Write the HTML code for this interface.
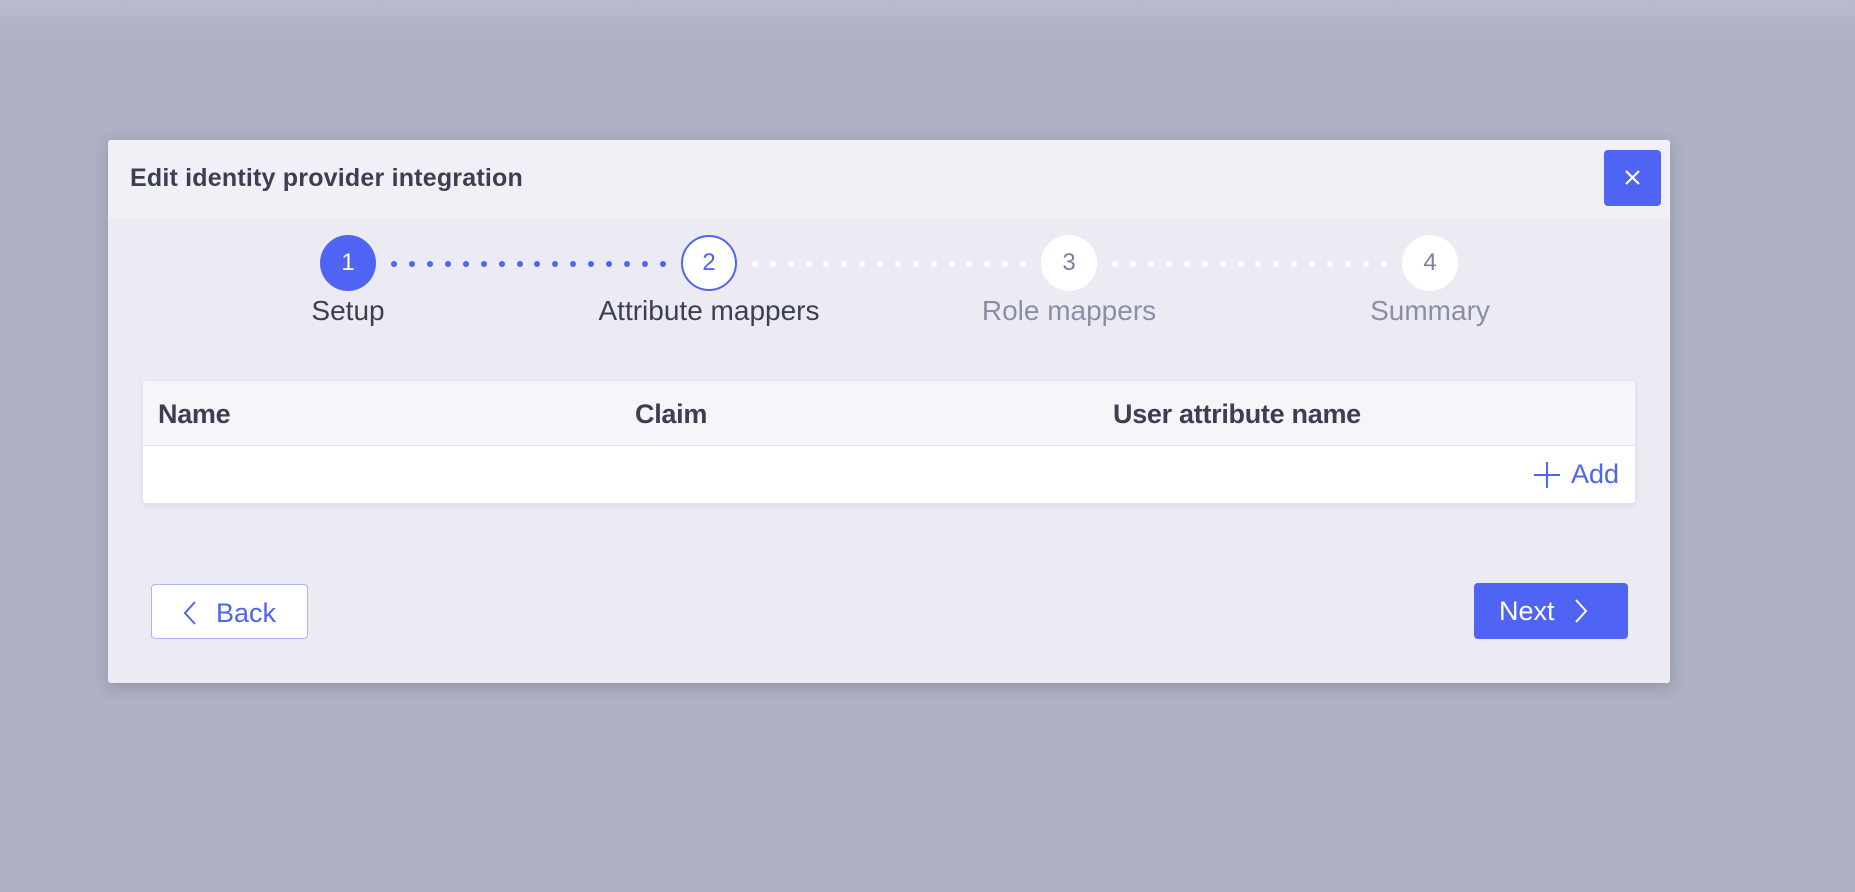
<!DOCTYPE html>
<html><head><style>
body{margin:0;width:1855px;height:892px;background:linear-gradient(#babbcc 0,#aeb0c3 40px,#aeb0c3 100%);font-family:"Liberation Sans",sans-serif;position:relative;overflow:hidden}
.dlg{position:absolute;left:108px;top:140px;width:1562px;height:543px;background:#ecebf4;border-radius:3px;box-shadow:0 4px 14px rgba(60,60,90,.25)}
.hdr{position:absolute;left:0;top:0;right:0;height:78px;background:#f1f0f6;border-radius:3px 3px 0 0}
.title{position:absolute;left:22px;top:24px;font-size:25px;font-weight:bold;color:#3c3f52;letter-spacing:0.2px}
.close{position:absolute;left:1496px;top:10px;width:57px;height:56px;background:#4f63f5;border-radius:4px}
.c{position:absolute;width:56px;height:56px;border-radius:50%;box-sizing:border-box;text-align:center;line-height:56px;font-size:24px}
.lbl{position:absolute;font-size:28px;transform:translateX(-50%);white-space:nowrap;top:155px}
.dot{position:absolute;width:7px;height:7px;border-radius:50%;top:120px}
.tbl{position:absolute;left:35px;top:241px;width:1492px;height:122px;background:#fff;border-radius:3px;box-shadow:0 2px 6px rgba(80,80,120,.12)}
.th{position:absolute;left:0;top:0;right:0;height:64px;background:#f6f5fa;border-bottom:1px solid #e6e5ee}
.th span{position:absolute;top:18px;font-size:27px;font-weight:bold;color:#3c3f52;letter-spacing:-0.3px}
.btn{position:absolute;box-sizing:border-box;border-radius:4px;font-size:27px}
</style></head><body>
<div class="dlg">
 <div class="hdr"><div class="title">Edit identity provider integration</div>
  <div class="close"><svg width="57" height="56"><path d="M22 21L35 34M35 21L22 34" stroke="#fff" stroke-width="2.2" fill="none"/></svg></div>
 </div>
 <div class="c" style="left:212px;top:95px;background:#4f63f5;color:#fff">1</div>
 <div class="c" style="left:573px;top:95px;background:#fff;border:2px solid #4f63f5;color:#4f63f5;line-height:52px">2</div>
 <div class="c" style="left:933px;top:95px;background:#fff;color:#7c809a">3</div>
 <div class="c" style="left:1294px;top:95px;background:#fff;color:#7c809a">4</div>
 <div class="lbl" style="left:240px;color:#3c3f52">Setup</div>
 <div class="lbl" style="left:601px;color:#3c3f52">Attribute mappers</div>
 <div class="lbl" style="left:961px;color:#8a8ea6">Role mappers</div>
 <div class="lbl" style="left:1322px;color:#8a8ea6">Summary</div>
 <div id="dots"></div>
 <div class="tbl"><div class="th"><span style="left:15px">Name</span><span style="left:492px">Claim</span><span style="left:970px">User attribute name</span></div>
  <div style="position:absolute;right:16px;top:78px;font-size:27px;color:#4f63f5;display:flex;align-items:center"><svg width="28" height="28" style="margin-right:10px"><path d="M14 1V27M1 14H27" stroke="#4f63f5" stroke-width="2" fill="none"/></svg>Add</div>
 </div>
 <div class="btn" style="left:43px;top:444px;width:157px;height:55px;background:#fff;border:1.5px solid #a9b3f5;color:#4f63f5;padding:13px 0 0 30px"><svg width="16" height="26" style="vertical-align:-4px;margin-right:18px"><path d="M13 2L3 13L13 24" stroke="#4f63f5" stroke-width="2" fill="none"/></svg>Back</div>
 <div class="btn" style="left:1366px;top:443px;width:154px;height:56px;background:#4f63f5;color:#fff;padding:13px 0 0 25px">Next<svg width="16" height="26" style="vertical-align:-4px;margin-left:18px"><path d="M3 2L13 13L3 24" stroke="#fff" stroke-width="2" fill="none"/></svg></div>
</div>
<script>
var d=document.getElementById('dots'),h='';
function seg(a,b,col){var n=16,s=(b-a)/(n+1);for(var i=1;i<=n;i++)h+='<div class="dot" style="left:'+(a+s*i-3)+'px;width:6px;height:6px;top:121px;background:'+col+'"></div>';}
seg(268,573,'#4f63f5');seg(629,933,'#fff');seg(989,1294,'#fff');
d.innerHTML=h;
</script>
</body></html>
